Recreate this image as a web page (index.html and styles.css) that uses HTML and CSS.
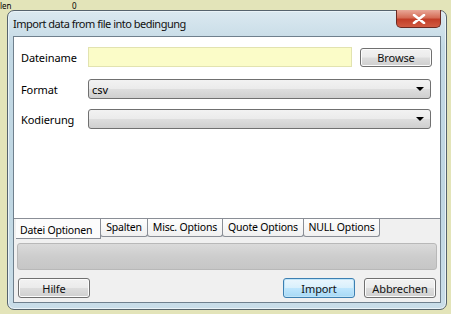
FILE: index.html
```html
<!DOCTYPE html>
<html>
<head>
<meta charset="utf-8">
<link rel="stylesheet" href="styles.css">
</head>
<body>
<div class="desk-top"><span class="dt-a">len</span><span class="dt-b">0</span></div>
<div class="window">
  <div class="titlebar">
    <span class="title">Import data from file into bedingung</span>
    <div class="close"><svg width="14" height="10" viewBox="0 0 14 10"><path d="M2 1 L12 9 M12 1 L2 9" stroke="#fff" stroke-width="2.6" stroke-linecap="round"/></svg></div>
  </div>
  <div class="client">
    <div class="page">
      <div class="row r1">
        <span class="lbl">Dateiname</span>
        <div class="input"></div>
        <button class="btn browse">Browse</button>
      </div>
      <div class="row r2">
        <span class="lbl">Format</span>
        <div class="combo wide"><span>csv</span><i class="arrow"></i></div>
      </div>
      <div class="row r3">
        <span class="lbl">Kodierung</span>
        <div class="combo wide"><span></span><i class="arrow"></i></div>
      </div>
    </div>
    <div class="tabs">
      <div class="tab active">Datei Optionen</div>
      <div class="tab t2">Spalten</div>
      <div class="tab t3">Misc. Options</div>
      <div class="tab t4">Quote Options</div>
      <div class="tab t5">NULL Options</div>
    </div>
    <div class="bar"></div>
    <div class="buttons">
      <button class="btn">Hilfe</button>
      <div class="spacer"></div>
      <button class="btn default">Import</button>
      <button class="btn">Abbrechen</button>
    </div>
  </div>
</div>
</body>
</html>
```

FILE: styles.css
```css
* { box-sizing: border-box; }
html, body { margin: 0; padding: 0; }
body {
  width: 451px; height: 314px; overflow: hidden;
  background: #e3e4b9;
  font-family: "Noto Sans", "Liberation Sans", sans-serif;
  font-size: 11px; color: #000;
}
.desk-top { height: 10px; padding-top: 1px; font-size: 8px; line-height: 9px; white-space: nowrap; }
.desk-top span { display: inline-block; vertical-align: top; }
.dt-a { width: 72px; }
.window {
  margin-left: 7px; width: 440px; height: 300px;
  border: 1px solid #56636d; border-radius: 7px;
  background: linear-gradient(180deg, #dbe9f0 0%, #c3d9e5 12%, #bfd6e2 60%, #c9dde8 100%);
  box-shadow: inset 0 0 0 1px #eaf3f7;
  display: flex; flex-direction: column;
}
.titlebar { height: 25px; display: flex; justify-content: space-between; align-items: flex-start; padding-left: 5px; }
.title { font-size: 11px; letter-spacing: -0.5px; line-height: 26px; color: #111; white-space: nowrap; }
.close {
  width: 45px; height: 18px; margin-right: 5px; margin-top: -1px;
  border: 1px solid #6b2a22; border-top: none; border-radius: 0 0 5px 5px;
  background: linear-gradient(180deg, #e9a898 0%, #d56d57 45%, #c23e28 55%, #d15b42 100%);
  display: flex; align-items: center; justify-content: center;
}
.close svg { display: block; }
.client {
  margin: 0 5px 6px 5px; flex: 1;
  border: 1px solid #6f808d;
  background: #f0f0f0;
  display: flex; flex-direction: column;
}
.page {
  background: #fff; height: 182px; border-bottom: 1px solid #8a8e96;
  padding: 10px 8px 0 7px;
}
.row { display: grid; grid-template-columns: 67px 1fr auto; align-items: center; height: 20px; }
.r2 { margin-top: 12px; }
.r3 { margin-top: 10px; }
.lbl { font-size: 11px; letter-spacing: -0.1px; }
.input { height: 20px; width: 264px; background: #fbfcc8; border: 1px solid #e2e3b0; }
.btn {
  font-family: "Noto Sans", sans-serif; font-size: 11px; color: #111;
  height: 20px; width: 72px; padding: 0; letter-spacing: -0.1px;
  border: 1px solid #707070; border-radius: 3px;
  background: linear-gradient(180deg, #f2f2f2 0%, #ebebeb 48%, #dddddd 52%, #cfcfcf 100%);
  box-shadow: inset 0 0 0 1px #fcfcfc;
}
.browse { margin-left: 7px; margin-top: 1px; height: 19px; }
.combo {
  grid-column: 2 / 4; height: 20px; margin-right: 1px;
  border: 1px solid #707070; border-radius: 3px;
  background: linear-gradient(180deg, #f2f2f2 0%, #ebebeb 48%, #dddddd 52%, #cfcfcf 100%);
  display: flex; align-items: center; justify-content: space-between; padding: 0 6px 0 3px;
}
.arrow { width: 0; height: 0; border-left: 4px solid transparent; border-right: 4px solid transparent; border-top: 4px solid #000; }
.tabs { display: flex; height: 20px; padding-left: 2px; }
.tab {
  height: 18px; border: 1px solid #8a8e96; border-top: none; border-radius: 0 0 3px 3px;
  background: linear-gradient(180deg, #fefefe, #f0f0f0);
  font-size: 10.5px; letter-spacing: -0.2px; line-height: 16px; padding: 0 3px; margin-left: -1px;
  white-space: nowrap; text-align: center;
}
.tab.active { height: 20px; background: #fcfcfc; border: none; border-bottom: 1px solid #8a8e96; border-right: 1px solid #8a8e96; padding: 3px 4px 0 4px; width: 85px; margin-left: 0; border-radius: 0; text-align: left; }
.t2 { width: 48px; }
.t3 { width: 76px; }
.t4 { width: 82px; }
.t5 { width: 77px; }
.bar {
  margin: 4px 3px 0 3px; height: 27px;
  border: 1px solid #b8b8b8; border-radius: 3px;
  background: linear-gradient(180deg, #dadada 0%, #cdcdcd 50%, #c6c6c6 100%);
}
.buttons { display: flex; gap: 9px; padding: 8px 4px 0 4px; }
.spacer { flex: 1; }
.btn.default { border-color: #3c7fb1; background: linear-gradient(180deg, #eaf6fd 0%, #d9f0fc 48%, #bee6fd 52%, #a7d9f5 100%); box-shadow: inset 0 0 0 1px #bfe4f8; }
```
